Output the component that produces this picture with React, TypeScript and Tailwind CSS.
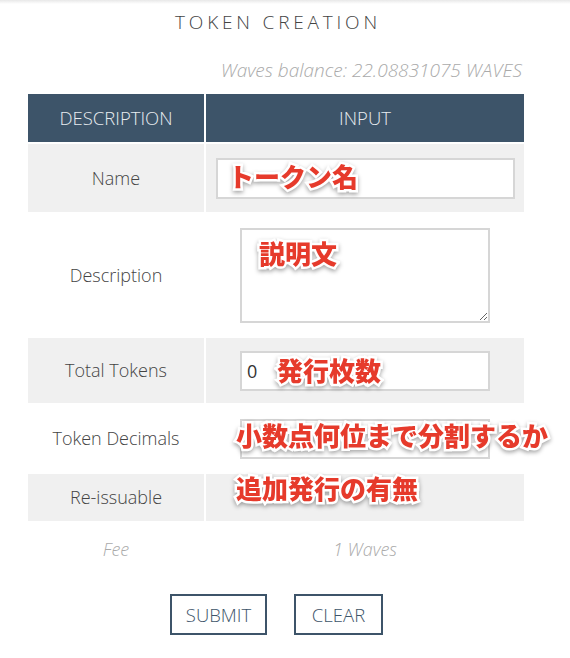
import React from "react";

const ui = "font-['Open_Sans','Liberation_Sans',sans-serif]";
const note =
  "absolute whitespace-nowrap font-['Noto_Sans_CJK_JP',sans-serif] text-[26px] font-black leading-none text-[#e63a2b] [-webkit-text-stroke:5px_white] [paint-order:stroke_fill] [filter:drop-shadow(0_2px_2px_rgba(0,0,0,0.35))]";

const Label = ({ children, gray }: { children: React.ReactNode; gray?: boolean }) => (
  <div
    className={`flex items-center justify-center text-[18px] font-light text-[#444] ${gray ? "bg-[#f0f0f0]" : "bg-white"}`}
  >
    {children}
  </div>
);

export default function App() {
  return (
    <div className={`relative min-h-[658px] w-[570px] bg-white ${ui}`}>
      <div className="h-[4px] bg-gradient-to-b from-[#e8e8e8] to-white" />

      <h1 className="mt-[6px] pr-[14px] text-center text-[19px] font-light leading-[24px] tracking-[3.8px] text-[#444]">
        TOKEN CREATION
      </h1>

      <p className="mr-[48px] mt-[24px] text-right text-[19px] font-light italic leading-[24px] text-[#aaa]">
        Waves balance: 22.08831075 WAVES
      </p>

      <div className="ml-[28px] mt-[12px] grid w-[496px] grid-cols-[176px_318px] gap-[2px]">
        {/* header */}
        <div className="flex h-[48px] items-center justify-center bg-[#3d5469] text-[18.5px] font-light text-[#e8ecf0]">
          DESCRIPTION
        </div>
        <div className="flex h-[48px] items-center justify-center bg-[#3d5469] text-[18.5px] font-light text-[#e8ecf0]">
          INPUT
        </div>

        {/* name */}
        <Label gray>Name</Label>
        <div className="relative flex h-[68px] items-center bg-[#f0f0f0] pl-[10px] pr-[9px]">
          <input className="h-[41px] w-full border-2 border-[#d6d6d6] bg-white outline-none" />
          <span className={`${note} left-[22px] top-[19px]`}>トークン名</span>
        </div>

        {/* description */}
        <Label>Description</Label>
        <div className="relative flex h-[122px] items-center bg-white pl-[34px]">
          <textarea className="h-[95px] w-[250px] border-2 border-[#d6d6d6] bg-white outline-none" />
          <span className={`${note} left-[53px] top-[26px]`}>説明文</span>
        </div>

        {/* total tokens */}
        <Label gray>Total Tokens</Label>
        <div className="relative flex h-[65px] items-center bg-[#f0f0f0] pl-[34px]">
          <input
            defaultValue="0"
            className="h-[40px] w-[250px] border-2 border-[#d6d6d6] bg-white pl-[5px] text-[18px] text-[#333] outline-none"
          />
          <span className={`${note} left-[71px] top-[19px]`}>発行枚数</span>
        </div>

        {/* token decimals */}
        <Label>Token Decimals</Label>
        <div className="relative flex h-[67px] items-center bg-white pl-[34px]">
          <input className="h-[40px] w-[250px] border-2 border-[#d6d6d6] bg-white outline-none" />
          <span className={`${note} left-[30px] top-[17px]`}>小数点何位まで分割するか</span>
        </div>

        {/* re-issuable */}
        <Label gray>Re-issuable</Label>
        <div className="relative h-[47px] bg-[#f0f0f0]">
          <span className={`${note} left-[30px] top-[1px]`}>追加発行の有無</span>
        </div>

        {/* fee */}
        <div className="flex h-[52px] items-center justify-center text-[18px] font-light italic text-[#aaa]">
          Fee
        </div>
        <div className="flex h-[52px] items-center justify-center text-[18px] font-light italic text-[#aaa]">
          1 Waves
        </div>
      </div>

      <div className="mt-[19px] flex justify-center gap-[27px] pr-[17px]">
        <button className="h-[41px] w-[97px] border-2 border-[#3d5469] bg-white text-[18.5px] font-light text-[#3d5469]">
          SUBMIT
        </button>
        <button className="h-[41px] w-[89px] border-2 border-[#3d5469] bg-white text-[18.5px] font-light text-[#3d5469]">
          CLEAR
        </button>
      </div>
    </div>
  );
}
